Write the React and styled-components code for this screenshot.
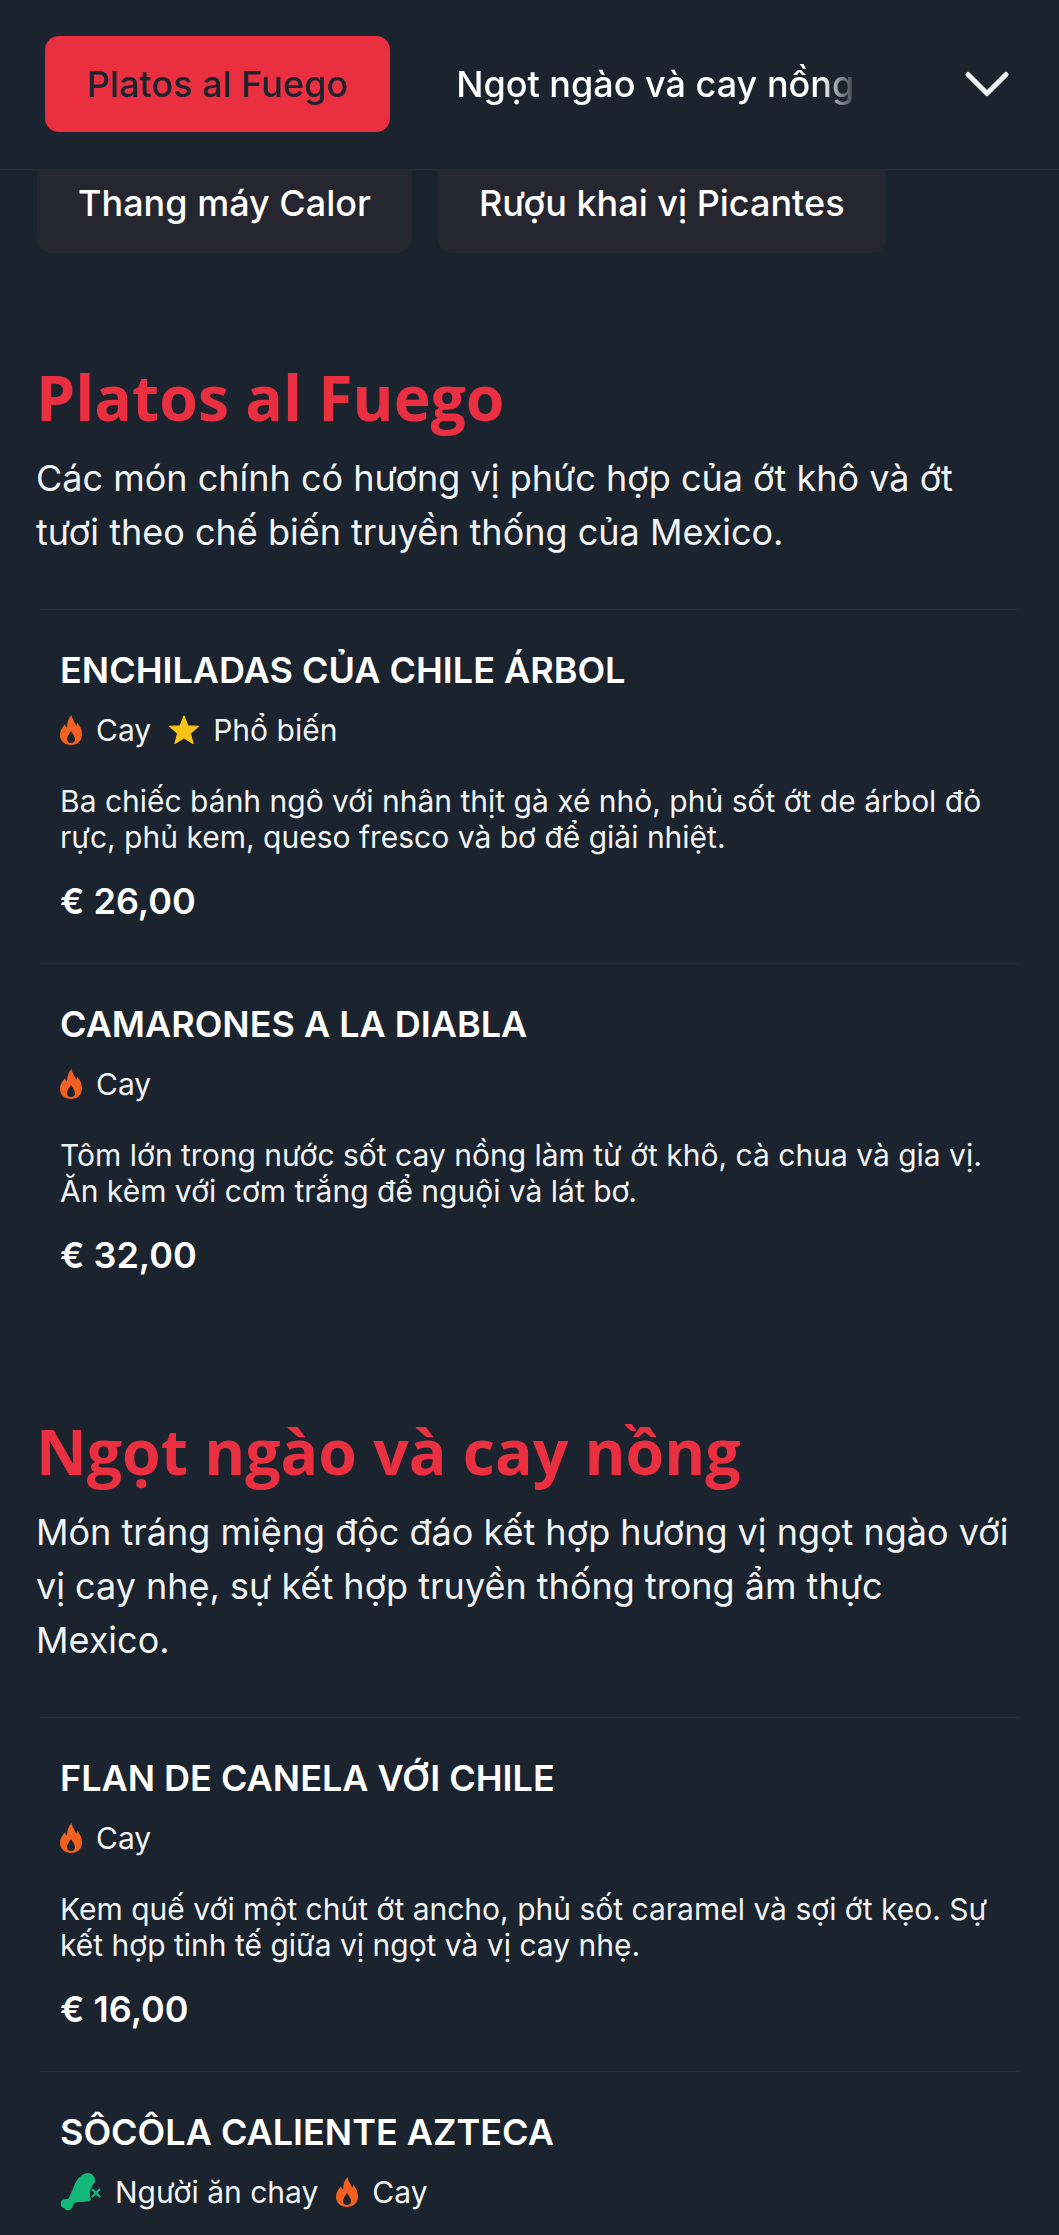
import React from 'react'
import styled, { createGlobalStyle } from 'styled-components'
import { ChevronDown } from 'lucide-react'

const GlobalStyle = createGlobalStyle`
  html, body {
    margin: 0;
    padding: 0;
    background: #1a232e;
  }
  body {
    width: 1059px;
    height: 2235px;
    overflow: hidden;
    font-family: Inter, "Noto Sans", sans-serif;
    color: #fff;
  }
  * { box-sizing: border-box; }
`

const Page = styled.div`
  height: 2235px;
  overflow: hidden;
  background: #1a232e;
`
const TopBar = styled.div`
  display: flex;
  align-items: center;
  height: 170px;
  padding: 0 34px 2px 45px;
  border-bottom: 1px solid #222b36;
`
const Tabs = styled.div`
  display: flex;
  align-items: center;
  gap: 24px;
  flex: 1;
  overflow: hidden;
  mask-image: linear-gradient(to right, #000 775px, transparent 815px);
`
const Tab = styled.div`
  flex: none;
  display: flex;
  align-items: center;
  height: 96px;
  padding: 0 42px;
  border-radius: 14px;
  font-size: 36px;
  font-weight: 500;
  color: ${p => (p.$active ? '#1a232e' : '#fff')};
  background: ${p => (p.$active ? '#e92f40' : 'transparent')};
`
const Chevron = styled(ChevronDown)`
  flex: none;
  color: #f2f3f5;
`
const Chips = styled.div`
  display: flex;
  gap: 26px;
  padding: 0 37px;
`
const Chip = styled.div`
  display: flex;
  align-items: center;
  height: 83px;
  padding: 0 41px 17px;
  background: #25262f;
  border-radius: 0 0 14px 14px;
  font-size: 36px;
  font-weight: 500;
`
const Section = styled.section`
  padding: 0 36px;
  margin-top: ${p => p.$top}px;
`
const Title = styled.h2`
  margin: 0;
  font-family: "Open Sans", sans-serif;
  font-size: 62.5px;
  line-height: 80px;
  font-weight: 700;
  color: #e92f40;
`
const Lead = styled.p`
  margin: 14px 0 0;
  font-size: 36px;
  line-height: 54px;
  color: #f2f3f5;
`
const ItemList = styled.div`
  margin-top: 50px;
`
const Item = styled.article`
  margin: 0 4px;
  padding: 38px 20px 0;
  height: 354px;
  border-top: 1px solid #232c37;
`
const ItemName = styled.h3`
  margin: 0;
  font-size: 36px;
  line-height: 44px;
  font-weight: 600;
`
const Tags = styled.div`
  display: flex;
  align-items: center;
  gap: 18px;
  margin-top: 16px;
  height: 44px;
`
const Tag = styled.span`
  display: flex;
  align-items: center;
  gap: 14px;
  font-size: 30px;
  color: #f2f3f5;
`
const Desc = styled.p`
  margin: 31px 0 0;
  font-size: 30px;
  line-height: 36px;
  color: #f2f3f5;
`
const Price = styled.div`
  margin-top: 24px;
  font-size: 36px;
  line-height: 44px;
  font-weight: 600;
`

const Flame = () => (
  <svg width="22" height="30" viewBox="0 0 22 30">
    <path
      fill="#f4601f"
      fillRule="evenodd"
      d="M11.5 0C12.5 5 15 7 16 10.5C16.6 11 17.2 9.5 17.3 7.5C20 11 22 14.5 22 19.5C22 26 17 30 11 30C5 30 0 26 0 20C0 15 3 12 5 9C5.3 11 6 12.3 7 12.5C7 7.5 8.5 3 11.5 0ZM11 16C12.5 19 15 21 15 24.5C15 27 13 28 11 28C9 28 7 27 7 24.5C7 21 9.5 19 11 16Z"
    />
  </svg>
)

const Star = () => (
  <svg width="30" height="30" viewBox="0 0 30 30">
    <polygon
      fill="#fcc419"
      stroke="#fcc419"
      strokeWidth="1.2"
      strokeLinejoin="round"
      points="15,1 18.9,10.9 29.3,11.4 21.3,18.2 24,28.4 15,22.8 6,28.4 8.7,18.2 0.7,11.4 11.1,10.9"
    />
  </svg>
)

const NoMeat = () => (
  <svg width="41" height="44" viewBox="0 -2 41 44">
    <path
      fill="#14b87a"
      d="M14 14C16 8 22 1 28 1C32 1 36 5 35 10C32 13 30 17 30 22C30 24 30 26 31 28C26 31 19 29 14 31C13 33 13 37 9 38C6 39 5 37 4 36C2 36 0 33 1 30C2 27 5 27 8 27C10 24 12 19 14 14Z"
    />
    <path stroke="#14b87a" strokeWidth="2.4" d="M32 17L40 25M40 17L32 25" />
  </svg>
)

const tagKinds = {
  hot: { icon: <Flame />, label: 'Cay' },
  popular: { icon: <Star />, label: 'Phổ biến' },
  veg: { icon: <NoMeat />, label: 'Người ăn chay' },
}

const MenuItem = ({ name, tags, desc, price }) => (
  <Item>
    <ItemName>{name}</ItemName>
    <Tags>
      {tags.map(t => (
        <Tag key={t}>
          {tagKinds[t].icon}
          {tagKinds[t].label}
        </Tag>
      ))}
    </Tags>
    {desc && <Desc>{desc}</Desc>}
    {price && <Price>{price}</Price>}
  </Item>
)

export default function App() {
  return (
    <Page>
      <GlobalStyle />
      <TopBar>
        <Tabs>
          <Tab $active>Platos al Fuego</Tab>
          <Tab>Ngọt ngào và cay nồng</Tab>
        </Tabs>
        <Chevron size={76} strokeWidth={1.6} />
      </TopBar>
      <Chips>
        <Chip>Thang máy Calor</Chip>
        <Chip>Rượu khai vị Picantes</Chip>
      </Chips>
      <Section $top={104}>
        <Title>Platos al Fuego</Title>
        <Lead>
          Các món chính có hương vị phức hợp của ớt khô và ớt tươi theo chế biến truyền thống của
          Mexico.
        </Lead>
        <ItemList>
          <MenuItem
            name="ENCHILADAS CỦA CHILE ÁRBOL"
            tags={['hot', 'popular']}
            desc="Ba chiếc bánh ngô với nhân thịt gà xé nhỏ, phủ sốt ớt de árbol đỏ rực, phủ kem, queso fresco và bơ để giải nhiệt."
            price="€ 26,00"
          />
          <MenuItem
            name="CAMARONES A LA DIABLA"
            tags={['hot']}
            desc="Tôm lớn trong nước sốt cay nồng làm từ ớt khô, cà chua và gia vị. Ăn kèm với cơm trắng để nguội và lát bơ."
            price="€ 32,00"
          />
        </ItemList>
      </Section>
      <Section $top={94}>
        <Title>Ngọt ngào và cay nồng</Title>
        <Lead>
          Món tráng miệng độc đáo kết hợp hương vị ngọt ngào với vị cay nhẹ, sự kết hợp truyền
          thống trong ẩm thực Mexico.
        </Lead>
        <ItemList>
          <MenuItem
            name="FLAN DE CANELA VỚI CHILE"
            tags={['hot']}
            desc="Kem quế với một chút ớt ancho, phủ sốt caramel và sợi ớt kẹo. Sự kết hợp tinh tế giữa vị ngọt và vị cay nhẹ."
            price="€ 16,00"
          />
          <MenuItem name="SÔCÔLA CALIENTE AZTECA" tags={['veg', 'hot']} />
        </ItemList>
      </Section>
    </Page>
  )
}
